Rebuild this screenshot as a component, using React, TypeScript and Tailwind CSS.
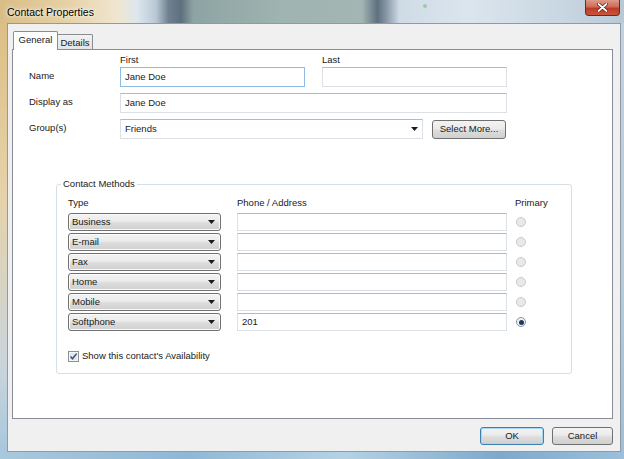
import React from 'react';

function Arrow() {
  return (
    <svg width="7" height="4" viewBox="0 0 7 4" className="shrink-0">
      <path d="M0 0h7L3.5 4z" fill="#1b1b1b" />
    </svg>
  );
}

function TextBox({ className, value, focused }: { className: string; value?: string; focused?: boolean }) {
  return (
    <div
      className={`${className} flex items-center bg-white border px-[4px] ${
        focused ? 'border-[#8ebbe6]' : 'border-[#dbdfe6] border-t-[#b5b8bf]'
      }`}
    >
      {value}
    </div>
  );
}

function TypeCombo({ label }: { label: string }) {
  return (
    <div className="w-[153px] h-[18px] flex items-center justify-between pl-[3px] pr-[5px] rounded-[3px] border border-[#707070] bg-[linear-gradient(#f3f3f3,#ebebeb_45%,#dcdcdc_55%,#cfcfcf)] shadow-[inset_0_0_0_1px_#fbfbfb]">
      <span>{label}</span>
      <Arrow />
    </div>
  );
}

function Radio({ checked }: { checked?: boolean }) {
  return (
    <span
      className={`w-[10px] h-[10px] rounded-full border flex items-center justify-center ${
        checked ? 'border-[#8496a8] bg-[#eef2f6]' : 'border-[#c9c9c9] bg-[#e9e9e9]'
      }`}
    >
      {checked && <span className="w-[5px] h-[5px] rounded-full bg-[#1d3a58]" />}
    </span>
  );
}

function Button({ children, className }: { children: React.ReactNode; className: string }) {
  return (
    <div
      className={`${className} flex items-center justify-center rounded-[3px] border bg-[linear-gradient(#f3f3f3,#ebebeb_45%,#dddddd_55%,#d0d0d0)]`}
    >
      {children}
    </div>
  );
}

const rows = [
  { type: 'Business', value: '' },
  { type: 'E-mail', value: '' },
  { type: 'Fax', value: '' },
  { type: 'Home', value: '' },
  { type: 'Mobile', value: '' },
  { type: 'Softphone', value: '201', primary: true },
];

export default function App() {
  return (
    <div className="w-[624px] h-[459px] overflow-hidden flex flex-col font-['Liberation_Sans',Arial,sans-serif] text-[9.5px] leading-[12px] text-[#1a1a1a]">
      {/* Title bar */}
      <div className="relative h-[23px] shrink-0 flex items-center pl-[7px] bg-[linear-gradient(90deg,#d9bd86_0%,#e5cfa2_10%,#f0e6d2_19%,#dde6ee_22%,#b9c8d4_25%,#6f8090_27%,#5e6f7e_29%,#8ea4a4_31%,#9fb3b0_45%,#a3b6b4_58%,#5f7080_60.5%,#8a9aa8_62%,#cfdbe6_64%,#dbe5ee_75%,#c9d7e2_90%,#b8c9d6_100%)]">
        <span className="text-[10.5px] text-black [text-shadow:0_0_6px_#fff,0_0_3px_#fff]">Contact Properties</span>
        <span className="absolute left-[423px] top-[4px] w-[4px] h-[4px] rounded-full bg-[#7cbf7c] opacity-60" />
        <div className="absolute left-[585px] top-0 w-[35px] h-[16px] rounded-b-[4px] border border-t-0 border-[#6b2a1e] bg-[linear-gradient(#dd9a88,#cf6c5a_45%,#bf3a26_55%,#c9543c)] flex items-center justify-center">
          <svg width="11" height="9" viewBox="0 0 11 9">
            <path d="M1.5 1l8 7M9.5 1l-8 7" stroke="#4a1a12" strokeWidth="3.2" strokeLinecap="round" />
            <path d="M1.5 1l8 7M9.5 1l-8 7" stroke="#ffffff" strokeWidth="1.8" strokeLinecap="round" />
          </svg>
        </div>
      </div>

      <div className="flex h-[429px] shrink-0">
        {/* left frame */}
        <div className="w-[7px] bg-[linear-gradient(#dcbf85,#e6d2aa_40%,#c9d5dc_80%,#a9c6dc)]" />

        {/* client */}
        <div className="w-[614px] flex flex-col bg-[#f0f0f0] shadow-[inset_0_0_0_1px_#8e9aa5] pt-[8px]">
          {/* tabs */}
          <div className="flex items-end h-[19px] ml-[6px]">
            <div className="relative z-10 w-[45px] h-[19px] bg-white border border-b-0 border-[#898c95] rounded-t-[2px] flex items-center justify-center pb-[2px]">
              General
            </div>
            <div className="w-[35px] h-[16px] border border-l-0 border-b-0 border-[#898c95] rounded-tr-[2px] bg-[linear-gradient(#f2f2f2,#e3e3e3)] flex items-center justify-center">
              Details
            </div>
          </div>

          {/* panel */}
          <div className="-mt-px ml-[5px] w-[601px] h-[370px] bg-white border border-[#898c95] flex flex-col">
            <div className="pt-[4px] pl-[16px] flex flex-col">
              <div className="flex h-[13px] pl-[91px]">
                <span className="w-[202px]">First</span>
                <span>Last</span>
              </div>
              <div className="flex items-center">
                <span className="w-[91px] -mt-[3px]">Name</span>
                <TextBox className="w-[185px] h-[20px]" value="Jane Doe" focused />
                <TextBox className="ml-[17px] w-[185px] h-[20px]" />
              </div>
              <div className="flex items-center mt-[6px]">
                <span className="w-[91px] -mt-[2px]">Display as</span>
                <TextBox className="w-[387px] h-[20px]" value="Jane Doe" />
              </div>
              <div className="flex items-center mt-[6px]">
                <span className="w-[91px] -mt-[2px]">Group(s)</span>
                <div className="w-[303px] h-[20px] flex items-center justify-between bg-white border border-[#dbdfe6] border-t-[#b5b8bf] pl-[4px] pr-[4px]">
                  <span>Friends</span>
                  <Arrow />
                </div>
                <Button className="ml-[9px] w-[74px] h-[19px] border-[#707070]">Select More...</Button>
              </div>
            </div>

            <fieldset className="mt-[39px] ml-[43px] w-[516px] h-[196px] border border-[#d5dfe5] rounded-[3px] shadow-[inset_0_0_0_1px_#fff]">
              <legend className="ml-[4px] px-[2px]">Contact Methods</legend>
              <div className="pl-[11px] pt-[7px] flex flex-col">
                <div className="flex h-[12px]">
                  <span className="w-[169px]">Type</span>
                  <span className="w-[278px]">Phone / Address</span>
                  <span>Primary</span>
                </div>
                <div className="mt-[4px] flex flex-col gap-[2px]">
                  {rows.map((r) => (
                    <div key={r.type} className="flex items-center">
                      <TypeCombo label={r.type} />
                      <TextBox className="ml-[16px] w-[270px] h-[18px]" value={r.value} />
                      <span className="ml-[9px]">
                        <Radio checked={r.primary} />
                      </span>
                    </div>
                  ))}
                </div>
                <div className="mt-[19px] flex items-center h-[12px]">
                  <svg width="11" height="11" viewBox="0 0 11 11" className="shrink-0">
                    <rect x="0.5" y="0.5" width="10" height="10" fill="#f4f6f8" stroke="#8e8f8f" />
                    <rect x="2" y="2" width="7" height="7" fill="#e3e8ee" />
                    <path d="M2.5 5.5l2 2.3L8.6 2.6" fill="none" stroke="#3b4f8a" strokeWidth="1.5" />
                  </svg>
                  <span className="ml-[3px]">Show this contact's Availability</span>
                </div>
              </div>
            </fieldset>
          </div>

          {/* footer buttons */}
          <div className="mt-[8px] flex justify-end gap-[8px] w-[606px]">
            <Button className="w-[64px] h-[18px] border-[#3c7fb1] shadow-[inset_0_0_0_1px_#a9d7f3]">OK</Button>
            <Button className="w-[61px] h-[18px] border-[#707070]">Cancel</Button>
          </div>
        </div>

        {/* right frame */}
        <div className="w-[3px] bg-[linear-gradient(#c3d2de,#b9cbd9_60%,#9fbfd6)]" />
      </div>

      {/* bottom frame */}
      <div className="h-[7px] shrink-0 bg-[linear-gradient(90deg,#a9c8dc,#8fb8d6_30%,#b5d2e4_55%,#7ea9cc_80%,#9cc0da)]" />
    </div>
  );
}
